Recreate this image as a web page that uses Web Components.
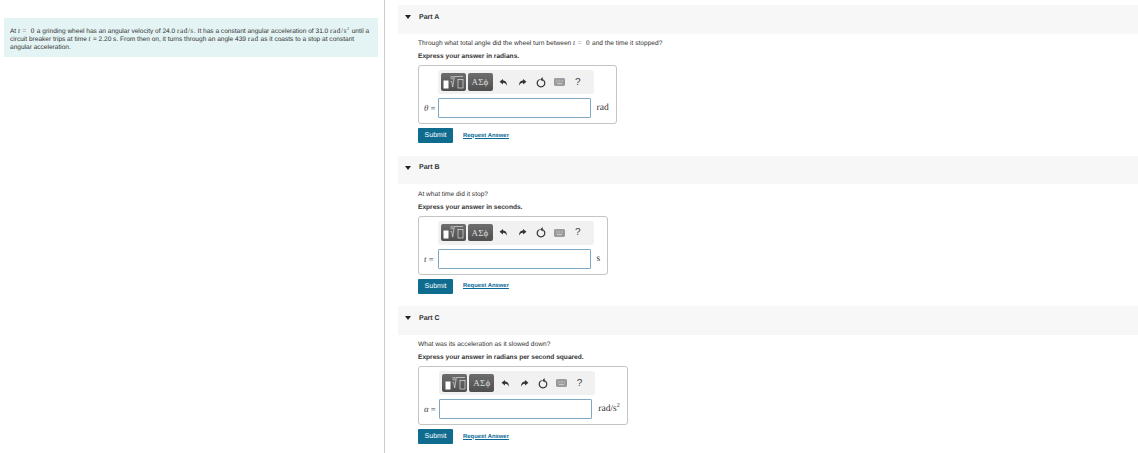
<!DOCTYPE html>
<html>
<head>
<meta charset="utf-8">
<title>Part A</title>
<style>
html, body { margin: 0; height: 100%; background: #fff; }
body { font-family: "Liberation Sans", Arial, sans-serif; color: #333; overflow: hidden; text-rendering: geometricPrecision; }
m-num sup { font-size: .6em; line-height: 0; }
</style>
</head>
<body>
<problem-page>
  <problem-intro slot="intro">
    At <m-var>t</m-var> <m-num>= 0</m-num> a grinding wheel has an angular velocity of 24.0 <m-num>rad/s</m-num>. It has a constant angular acceleration of 31.0 <m-num>rad/s<sup>2</sup></m-num> until a<br>circuit breaker trips at time <m-var>t</m-var> = 2.20 s. From then on, it turns through an angle 439 <m-num>rad</m-num> as it coasts to a stop at constant<br>angular acceleration.
  </problem-intro>

  <part-section title="Part A" hint="Express your answer in radians." symbol="θ" unit="rad">
    Through what total angle did the wheel turn between <m-var>t</m-var> <m-num>= 0</m-num> and the time it stopped?
  </part-section>
  <part-section title="Part B" hint="Express your answer in seconds." symbol="t" unit="s">
    At what time did it stop?
  </part-section>
  <part-section title="Part C" hint="Express your answer in radians per second squared." symbol="α" unit="rad/s" sup="2" label-width="16.3">
    What was its acceleration as it slowed down?
  </part-section>
</problem-page>

<script>
// math text, serif like the equation renderer
class MVar extends HTMLElement {
  constructor () {
    super()
    this.attachShadow({ mode: 'open' }).innerHTML = `
      <style>:host { display: inline; font-family: "Liberation Serif", serif; font-style: italic; font-size: 1.1em; line-height: 0; letter-spacing: .5px; }</style>
      <slot></slot>`
  }
}
customElements.define('m-var', MVar)

class MNum extends HTMLElement {
  constructor () {
    super()
    this.attachShadow({ mode: 'open' }).innerHTML = `
      <style>:host { display: inline; font-family: "Liberation Serif", serif; font-size: 1.1em; line-height: 0; word-spacing: 1.4px; letter-spacing: .6px; }</style>
      <slot></slot>`
  }
}
customElements.define('m-num', MNum)

class ProblemPage extends HTMLElement {
  constructor () {
    super()
    this.attachShadow({ mode: 'open' }).innerHTML = `
      <style>
        :host { display: grid; grid-template-columns: 385px 1fr; height: 453px; }
        .left { border-right: 1px solid #ccc; padding: 18px 6px 0 4px; box-sizing: border-box; }
        .right { padding: 5px 0 0 13px; display: flex; flex-direction: column; gap: 12.5px; min-width: 0; }
      </style>
      <div class="left"><slot name="intro"></slot></div>
      <div class="right"><slot></slot></div>`
  }
}
customElements.define('problem-page', ProblemPage)

class ProblemIntro extends HTMLElement {
  constructor () {
    super()
    this.attachShadow({ mode: 'open' }).innerHTML = `
      <style>
        :host { display: block; background: #e4f3f3; padding: 9.5px 6px 4.5px; font-size: 6.55px; line-height: 8.3px; color: #333; white-space: nowrap; }
      </style>
      <slot></slot>`
  }
}
customElements.define('problem-intro', ProblemIntro)

const toolbarTemplate = document.createElement('template')
toolbarTemplate.innerHTML = `
<style>
  :host { display: flex; align-items: center; height: 24px; box-sizing: border-box; padding: 0 3px; background: #f1f1f1; border-radius: 3px; width: 156px; }
  .btn { width: 25px; height: 17.5px; border-radius: 2px; background: linear-gradient(#6d6d6d, #4f4f4f); display: flex; align-items: center; justify-content: center; color: #ddd; margin-right: 2px; }
  .greek { font-family: "Liberation Serif", serif; font-size: 9px; letter-spacing: .2px; }
  .icon { flex: none; width: 18.5px; display: flex; justify-content: center; align-items: center; }
  .help { font-family: "Liberation Sans", sans-serif; font-size: 10px; color: #444; }
  svg { display: block; }
</style>
<div class="btn">
  <svg width="24" height="15" viewBox="0 0 24 15">
    <rect x="2.5" y="5.5" width="5" height="8" fill="#fff"/>
    <path d="M9.5 6.5h1.2l1 5.5 1.6-10.5H22" fill="none" stroke="#ddd" stroke-width=".7"/>
    <rect x="17" y="4.5" width="5" height="8.5" fill="none" stroke="#ddd" stroke-width=".7"/>
    <rect x="10" y="1.5" width="2" height="2.4" fill="none" stroke="#ddd" stroke-width=".5"/>
  </svg>
</div>
<div class="btn greek">ΑΣϕ</div>
<div class="icon">
  <svg width="9" height="9" viewBox="0 0 10 9"><path d="M4.4 0.6 0.6 3.6l3.8 3V4.9C6.4 4.8 7.8 5.6 8.6 8.2 9.2 4.8 7.2 2.4 4.4 2.4z" fill="#333"/></svg>
</div>
<div class="icon">
  <svg width="9" height="9" viewBox="0 0 10 9"><path d="M5.6 0.6 9.4 3.6l-3.8 3V4.9C3.6 4.8 2.2 5.6 1.4 8.2.8 4.8 2.8 2.4 5.6 2.4z" fill="#333"/></svg>
</div>
<div class="icon">
  <svg width="10" height="11" viewBox="0 0 10 11"><path d="M3.6 2.5A3.8 3.8 0 1 0 6.4 2.5" fill="none" stroke="#333" stroke-width="1.2"/><path d="M6.6 0 4.2 2.5 6.8 4.6z" fill="#333"/></svg>
</div>
<div class="icon">
  <svg width="11" height="8" viewBox="0 0 11 8"><rect x=".4" y=".4" width="10.2" height="7.2" rx="1" fill="#9a9a9a" stroke="#777" stroke-width=".6"/><path d="M2 2.3h7M2 3.8h7" stroke="#ccc" stroke-width=".6" stroke-dasharray="1 .5"/><path d="M3 5.6h5" stroke="#ddd" stroke-width=".8"/></svg>
</div>
<div class="icon help">?</div>`

class MathToolbar extends HTMLElement {
  constructor () {
    super()
    this.attachShadow({ mode: 'open' }).appendChild(toolbarTemplate.content.cloneNode(true))
  }
}
customElements.define('math-toolbar', MathToolbar)

class AnswerBox extends HTMLElement {
  constructor () {
    super()
    const sup = this.getAttribute('sup')
    const labelWidth = this.getAttribute('label-width') || '14.5'
    this.attachShadow({ mode: 'open' }).innerHTML = `
      <style>
        :host { display: inline-grid; grid-template-columns: ${labelWidth}px auto auto; border: 1px solid #c4c4c4; border-radius: 3px; padding: 4px 7px 5px 4px; row-gap: 4px; align-items: center; background: #fff; }
        math-toolbar { grid-column: 2 / 4; }
        .label { font-family: "Liberation Serif", serif; font-size: 8.5px; padding-left: 1px; white-space: nowrap; color: #444; }
        .label i { font-size: 9px; }
        .input { width: 153px; height: 20px; box-sizing: border-box; border: 1px solid #7fa9c2; border-radius: 1px; background: #fff; }
        .unit { font-family: "Liberation Serif", serif; font-size: 9.5px; padding-left: 6px; color: #333; white-space: nowrap; }
        sup { font-size: 6px; line-height: 0; }
      </style>
      <math-toolbar></math-toolbar>
      <div class="label"><i>${this.getAttribute('symbol')}</i> =</div>
      <div class="input"></div>
      <div class="unit">${this.getAttribute('unit')}${sup ? `<sup>${sup}</sup>` : ''}</div>`
  }
}
customElements.define('answer-box', AnswerBox)

class PartSection extends HTMLElement {
  constructor () {
    super()
    const a = n => this.getAttribute(n) || ''
    const sup = a('sup') ? ` sup="${a('sup')}"` : ''
    const labelWidth = a('label-width') ? ` label-width="${a('label-width')}"` : ''
    this.attachShadow({ mode: 'open' }).innerHTML = `
      <style>
        :host { display: block; font-size: 6.6px; color: #333; }
        .head { height: 28.5px; background: #f7f7f7; display: flex; align-items: center; padding: 0 0 4px 7px; box-sizing: border-box; font-size: 7px; font-weight: bold; }
        .arrow { width: 0; height: 0; border-left: 3px solid transparent; border-right: 3px solid transparent; border-top: 4px solid #222; margin-right: 8px; }
        .body { padding: 5.5px 0 0 20px; display: flex; flex-direction: column; align-items: flex-start; }
        .q { height: 10px; line-height: 10px; white-space: nowrap; }
        .hint { height: 10px; line-height: 10px; font-weight: bold; margin: 3px 0 3px; }
        .actions { display: flex; align-items: center; gap: 10px; margin-top: 4px; }
        .submit { width: 35px; height: 15px; background: #0f6c8f; color: #fff; font-size: 7px; display: flex; align-items: center; justify-content: center; border-radius: 1px; }
        .link { color: #0b6a95; font-size: 5.9px; font-weight: bold; text-decoration: underline; }
      </style>
      <div class="head"><span class="arrow"></span>${a('title')}</div>
      <div class="body">
        <div class="q"><slot></slot></div>
        <div class="hint">${a('hint')}</div>
        <answer-box symbol="${a('symbol')}" unit="${a('unit')}"${sup}${labelWidth}></answer-box>
        <div class="actions"><div class="submit">Submit</div><a class="link">Request Answer</a></div>
      </div>`
  }
}
customElements.define('part-section', PartSection)
</script>
</body>
</html>
